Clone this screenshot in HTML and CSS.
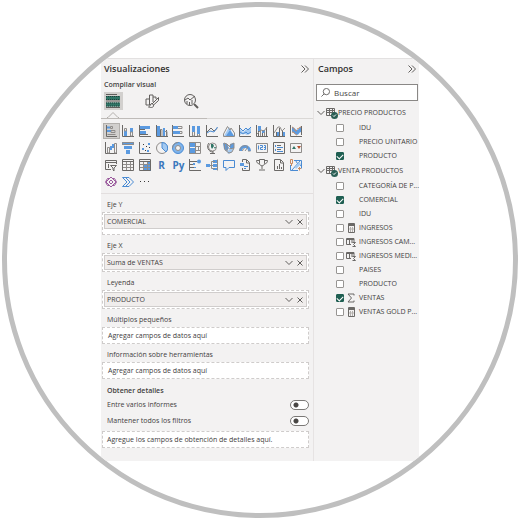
FILE: index.html
```
<!DOCTYPE html>
<html lang="es">
<head>
<meta charset="utf-8">
<meta name="viewport" content="width=device-width, initial-scale=1">
<title>Visualizaciones</title>
<link rel="stylesheet" href="styles.css">
</head>
<body>
<main class="lens">
<div class="workspace">

<section class="visuals">
  <header class="pane-head">
    <h2>Visualizaciones</h2>
    <button class="plain" aria-label="Contraer visualizaciones"><svg class="chev2" viewBox="0 0 8 8"><path d="M.5.5 4 4 .5 7.5M4 .5 7.5 4 4 7.5"/></svg></button>
  </header>
  <h3>Compilar visual</h3>
  <nav class="modes">
    <button class="mode on" aria-label="Compilar"><svg viewBox="0 0 18 18"><path class="d" d="M2 2.500h11M2 9h14M2 15.500h14"/><path class="teal" d="M2 4h14v4H2zM2 10.500h14v4H2z"/><path class="dots" d="M2 4.500h14M2 7.500h14M2 11h14M2 14h14"/></svg></button>
    <button class="mode" aria-label="Formato"><svg viewBox="0 0 18 18"><path class="d" d="M6.500 13H3V7h3.500v6V3H10v7M10 5h3v2M15.500 5.500 9 12M15.500 5.500v3L10 13.500M9 11.500c-2 0-1.500 3-3.500 3.500 3 1 5.500.5 5-2z"/></svg></button>
    <button class="mode" aria-label="Análisis"><svg viewBox="0 0 18 18"><circle class="d" cx="8" cy="8" r="5.500"/><path class="d" d="m12 12 4 4M3 8l3-2 2 2 5-4M5 9v3M7.500 10v3M10 8v4"/><path class="thick" d="m12.500 12.500 3.500 3.500"/></svg></button>
  </nav>
  <svg class="notch" viewBox="0 0 12 6" aria-hidden="true"><path d="M0 5.500h1L6 .5l5 5h1"/></svg>
  <div class="rule"><span></span></div>

  <div class="gallery">
    <button class="on" aria-label="Barras apiladas"><svg viewBox="0 0 12 12"><path class="g" d="M1.500 0v11.500H12"/><path class="b" d="M2 1.500h3v2H2zM2 5h4v2H2z"/><path class="o" d="M5.500 1.500h2v2h-2zM6 5.500h4v2H6zM2.500 9.500h8"/></svg></button>
    <button aria-label="Columnas apiladas"><svg viewBox="0 0 12 12"><path class="g" d="M.5 0v11.500H12"/><path class="b" d="M2 6h3v5H2zM8 3h3v4H8z"/><path class="o" d="M2.500 3.500h2V6h-2zM8.500 7h2v4h-2z"/></svg></button>
    <button aria-label="Barras agrupadas"><svg viewBox="0 0 12 12"><path class="g" d="M.5 0v11.500H12M1 4.500h5M1 9.500h8"/><path class="b" d="M1 1h10v3H1zM1 6h6v3H1z"/></svg></button>
    <button aria-label="Columnas agrupadas"><svg viewBox="0 0 12 12"><path class="g" d="M.5 0v11.500H12M4.500 4v7M10.500 5v6"/><path class="b" d="M1 1h3v10H1zM7 3h2v8H7z"/><path class="o" d="M4 4.500h2V11M9 6.500h2V11"/></svg></button>
    <button aria-label="Barras 100%"><svg viewBox="0 0 12 12"><path class="g" d="M.5 0v11.500H12"/><path class="o" d="M1 1.500h9v2H1zM1 6.500h9v2H1z"/><path class="b" d="M1 1h5v3H1zM1 6h7v3H1z"/></svg></button>
    <button aria-label="Columnas 100%"><svg viewBox="0 0 12 12"><path class="g" d="M.5 0v11.500H12"/><path class="o" d="M3.500 1.500h2V11h-2zM8.500 1.500h2V11h-2z"/><path class="b" d="M3 1h3v6H3zM8 1h3v8H8z"/></svg></button>
    <button aria-label="Líneas"><svg viewBox="0 0 12 12"><path class="g" d="M.5 0v11.500H12M1 7l4-4 3 3 3.500-3"/><path class="bl" d="m1 8 3-2 4 1 3.500-5"/></svg></button>
    <button aria-label="Áreas"><svg viewBox="0 0 12 12"><path class="l" d="m1 11 5-9 5 9z"/><path class="b" d="m3 11 4-6 4 6z"/><path class="o" d="M.5 11.500V9l4-7.500L7 5l1-2 3.500 5v3.500z"/></svg></button>
    <button aria-label="Áreas apiladas"><svg viewBox="0 0 12 12"><path class="l" d="m1 4 3 3 4-3 4-1v5l-4 2-4-2-3 2z"/><path class="bl" d="m1 3 3 3 3-3 2 2 3-3M1 7l3 2 3-2 2 2 3-2"/><path class="g" d="M.5 0v11.500H12"/></svg></button>
    <button aria-label="Líneas y columnas apiladas"><svg viewBox="0 0 12 12"><path class="b" d="M2 1h3v5H2zM6 5h3v3H6zM10 6h1v3h-1z"/><path class="g" d="M.5 0v11.500H12M2.500 6v5M6.500 8v3M10.500 2v9"/><path class="o" d="m1 9 4-4 3 1 3-4M4.500 6v5M8.500 7v4"/></svg></button>
    <button aria-label="Líneas y columnas agrupadas"><svg viewBox="0 0 12 12"><path class="g" d="M.5 0v11.500H12M3.500 7v4M6.500 3v8M9.500 6v5"/><path class="b" d="M4 7h2v4H4zM10 7h2v4h-2z"/><path class="o" d="m1 8 4-6h2l2 4 3-3"/></svg></button>
    <button aria-label="Cintas"><svg viewBox="0 0 12 12"><path class="b" d="M2 2c3 0 3 3 5 3s2-3 4-3v5c-2 0-2 3-4 3S4 7 2 7z"/><path class="or" d="M2 7c3 0 3 3 5 3M7 4c2 0 2-2 4-2M2 2c2 0 2 4 5 4"/><path class="g" d="M.5 0v11.500H12M11.500 1v9"/></svg></button>

    <button aria-label="Cascada"><svg viewBox="0 0 12 12"><path class="g" d="M.5 0v11.500H12"/><path class="o" d="M2.500 5.500h2V11h-2zM9.500 1.500h2V11h-2z"/><path class="b" d="M5 4h2v4H5zM7 2h2v4H7z"/></svg></button>
    <button aria-label="Embudo"><svg viewBox="0 0 12 12"><path class="b" d="M0 0h12v3H0zM2 4h8v3H2zM4 8h4v4H4z"/><path class="o" d="M.5.5h11v2H.5z"/></svg></button>
    <button aria-label="Dispersión"><svg viewBox="0 0 12 12"><path class="g" d="M.5 0v11.500H12"/><path class="b" d="M3 6h2v2H3zM8 8h2v2H8zM9 1h2v2H9z"/><path class="k" d="M4 2h1v1H4zM6 8h1v1H6zM7 4h1v1H7zM10 5h1v1h-1z"/></svg></button>
    <button aria-label="Circular"><svg viewBox="0 0 12 12"><circle class="o" cx="6" cy="6" r="5.500"/><path class="l" d="M6 .5a5.500 5.500 0 0 1 4 9.500L6 6z"/><path class="bl" d="M6 .5a5.500 5.500 0 0 1 4 9.500L6 6z"/></svg></button>
    <button aria-label="Anillos"><svg viewBox="0 0 12 12"><circle class="ring" cx="6" cy="6" r="4"/><circle class="bl" cx="6" cy="6" r="5.500"/><circle class="o" cx="6" cy="6" r="2.500"/><path class="o" d="M6 .5A5.500 5.500 0 0 0 .5 6"/></svg></button>
    <button aria-label="Treemap"><svg viewBox="0 0 12 12"><path class="b" d="M0 0h6v5H0zM0 6h6v6H0z"/><path class="o" d="M.5.5h11v11H.5zM6.500 1v10M7 4.500h4M7 8.500h4M9.500 5v3"/></svg></button>
    <button aria-label="Mapa"><svg viewBox="0 0 12 12"><circle class="o" cx="6.500" cy="5" r="4"/><path class="green" d="M5 2h2l1 2-2 3-1-2zM8 5h2L9 7z"/><path class="g" d="M3 1C0 4 2 10 7 10M7 9v2.500M4 11.500h5"/></svg></button>
    <button aria-label="Mapa coroplético"><svg viewBox="0 0 12 12"><path class="b" d="m0 1 4 1 2 4-2 3-3-2zM7 2l4-1v5L7 7z"/><path class="l" d="m4 9 4-2 3-1-3 5-3 1z"/><path class="o" d="m1 1 3 1 3 3V3l4-2v5l-2 4-3 1-4-3zM4 2v7M6 7l5-1"/></svg></button>
    <button aria-label="Medidor"><svg viewBox="0 0 12 12"><path class="b" d="M0 9a6 6 0 0 1 12 0H9a3 3 0 0 0-6 0z"/><path class="o" d="M.5 9A5.500 5.500 0 0 1 9 4.500M3.500 9a2.500 2.500 0 0 1 2-2.500M6 9l3-4M9 9h2.500"/></svg></button>
    <button aria-label="Tarjeta"><svg viewBox="0 0 12 12"><path class="o" d="M.5 1.500h11v9H.5z"/><path class="bl" d="M2.500 3.500v4M4 3.500h2.500v2h-2v2H7M8 3.500h1.500v4H8M8 5.500h1.500"/></svg></button>
    <button aria-label="Tarjeta de varias filas"><svg viewBox="0 0 12 12"><path class="g" d="M.5.5h11v11H.5z"/><path class="g" d="M4 3.500h4M4 7.500h4"/><path class="bl" d="M2.500 3v2M4 5.500h6M2.500 7v2M4 9.500h6"/></svg></button>
    <button aria-label="KPI"><svg viewBox="0 0 12 12"><path class="o" d="M.5 1.500h11v9H.5z"/><path class="green" d="m2 7 2-3 2 3z"/><path class="rust" d="M7 4h4L9 7z"/></svg></button>

    <button aria-label="Segmentación"><svg viewBox="0 0 12 12"><path class="g" d="M6 10.500H.5v-9h11V5M1 3.500h10M3.500 5v4"/><path class="g" d="M5.500 6.500h6L9 9v3L8 11V9z"/></svg></button>
    <button aria-label="Tabla"><svg viewBox="0 0 12 12"><path class="o" d="M0 5.500h12M0 8.500h12M4.500 2v10M8.500 2v10"/><path class="g" d="M.5.5h11v11H.5zM0 2.500h12"/></svg></button>
    <button aria-label="Matriz"><svg viewBox="0 0 12 12"><path class="b" d="M4 6h8v6H4zM8 3h4v3H8z"/><path class="g" d="M.5.5h11v11H.5zM0 2.500h12"/><path class="o" d="M1 5.500h10M1 8.500h10M4.500 3v8M8.500 3v8"/></svg></button>
    <button class="glyph" aria-label="Objeto visual de R">R</button>
    <button class="glyph" aria-label="Objeto visual de Python">Py</button>
    <button aria-label="Influenciadores clave"><svg viewBox="0 0 12 12"><path class="g" d="M.5 0v11.500H12M1 2.500h7M1 5.500h3M1 8.500h5"/><circle class="b" cx="10" cy="2.500" r="2"/><path class="b" d="M4 4h2v2H4zM5 8h2v1H5z"/></svg></button>
    <button aria-label="Árbol de descomposición"><svg viewBox="0 0 12 12"><path class="b" d="M0 5h4v3H0zM7 1h4v3H7zM7 5h4v3H7zM7 9h4v2H7z"/><path class="o" d="M4 6.500h3M5.500 2.500v7M5.500 2.500H9M5.500 9.500H9M11.500.5v11"/></svg></button>
    <button aria-label="Preguntas y respuestas"><svg viewBox="0 0 12 12"><path class="bl" d="M.5 1.500h11v7H6l-3 3v-3H.5z"/></svg></button>
    <button aria-label="Narración inteligente"><svg viewBox="0 0 12 12"><path class="g" d="M3.500 3V.5h4l3 3v8h-7V9M7.500 1v3H10"/><path class="b" d="M1 4h4v3H1z"/><path class="bl" d="M5 7.500h4M5 9.500h2"/></svg></button>
    <button aria-label="Métricas"><svg viewBox="0 0 12 12"><path class="g" d="M3.500.5h5v4c0 3-5 3-5 0zM3 1.500H.5c0 2 1 3 3 3.500M9 1.500h2.500c0 2-1 3-3 3.500M6 7v3M3 11h6"/></svg></button>
    <button aria-label="Informe paginado"><svg viewBox="0 0 12 12"><path class="g" d="M1.500.5h6l3 3v8h-9zM7.500 1v3H10M4.500 7v3M6.500 5v5M8.500 8v2"/></svg></button>
    <button aria-label="ArcGIS"><svg viewBox="0 0 12 12"><path class="bl" d="M4 1.500h7.500v8M.5 6v5.500H8M10 2 2 11M6 2c0 3 5 3 5 5"/><path class="l" d="m5 8 4-5 2 2-5 5z"/><path class="or" d="M.5.5h2v4h-2zM1.500 5v2M8 9.500h3M9.500 8v3.500"/></svg></button>

    <button aria-label="Power Apps"><svg viewBox="0 0 12 12"><path class="pu" d="m6 1-5 5 5 5 5-5zM4 2.500H2.500L.5 6l2 3.500H4M8 2.500h1.500l2 3.500-2 3.500H8M6 4 4 6l2 2 2-2z"/></svg></button>
    <button aria-label="Power Automate"><svg viewBox="0 0 12 12"><path class="bl" d="M.5 1.500H7L11.500 6 7 10.500H.5L5 6zM4 2l4 4-4 4"/></svg></button>
    <button aria-label="Más objetos visuales"><svg viewBox="0 0 12 12"><path class="k" d="M1 5h1v1H1zM5 5h1v1H5zM9 5h1v1H9z"/></svg></button>
  </div>

  <div class="wells">
    <h4>Eje Y</h4>
    <div class="well roomy"><div class="pill"><span>COMERCIAL</span><button class="plain" aria-label="Opciones de COMERCIAL"><svg class="down" viewBox="0 0 8 6"><path d="m.5 1 3.500 3.500L7.500 1"/></svg></button><button class="plain" aria-label="Quitar COMERCIAL"><svg class="cross" viewBox="0 0 6 6"><path d="m.5.5 5 5m0-5-5 5"/></svg></button></div></div>
    <h4>Eje X</h4>
    <div class="well"><div class="pill"><span>Suma de VENTAS</span><button class="plain" aria-label="Opciones de Suma de VENTAS"><svg class="down" viewBox="0 0 8 6"><path d="m.5 1 3.500 3.500L7.500 1"/></svg></button><button class="plain" aria-label="Quitar Suma de VENTAS"><svg class="cross" viewBox="0 0 6 6"><path d="m.5.5 5 5m0-5-5 5"/></svg></button></div></div>
    <h4>Leyenda</h4>
    <div class="well"><div class="pill"><span>PRODUCTO</span><button class="plain" aria-label="Opciones de PRODUCTO"><svg class="down" viewBox="0 0 8 6"><path d="m.5 1 3.500 3.500L7.500 1"/></svg></button><button class="plain" aria-label="Quitar PRODUCTO"><svg class="cross" viewBox="0 0 6 6"><path d="m.5.5 5 5m0-5-5 5"/></svg></button></div></div>
    <h4>Múltiplos pequeños</h4>
    <div class="well empty">Agregar campos de datos aquí</div>
    <h4>Información sobre herramientas</h4>
    <div class="well empty">Agregar campos de datos aquí</div>
    <h4 class="strong">Obtener detalles</h4>
    <label class="switch">Entre varios informes<input type="checkbox" role="switch"></label>
    <label class="switch">Mantener todos los filtros<input type="checkbox" role="switch"></label>
    <div class="well empty drill">Agregue los campos de obtención de detalles aquí.</div>
  </div>
</section>

<section class="fields">
  <header class="pane-head">
    <h2>Campos</h2>
    <button class="plain" aria-label="Contraer campos"><svg class="chev2" viewBox="0 0 8 8"><path d="M.5.5 4 4 .5 7.5M4 .5 7.5 4 4 7.5"/></svg></button>
  </header>
  <label class="search"><svg viewBox="0 0 10 10"><circle cx="6" cy="4" r="3.500"/><path d="M3.500 6.500.5 9.500"/></svg><input type="text" placeholder="Buscar" aria-label="Buscar"></label>

  <button class="table-name"><svg class="down" viewBox="0 0 8 6"><path d="m.5 1 3.500 3.500L7.500 1"/></svg><svg class="tbl" viewBox="0 0 12 12"><path class="g" d="M.5 1.500h8v7h-8zM0 3.500h9M0 5.500h9M3.500 1v8M6.500 1v8"/><circle class="dot" cx="8.500" cy="8.500" r="3.500"/><path class="tick" d="m7 8.500 1 1 2-2"/></svg>PRECIO PRODUCTOS</button>
  <ul>
    <li><label><input type="checkbox"><i></i>IDU</label></li>
    <li><label><input type="checkbox"><i></i>PRECIO UNITARIO</label></li>
    <li><label><input type="checkbox" checked><i></i>PRODUCTO</label></li>
  </ul>
  <button class="table-name"><svg class="down" viewBox="0 0 8 6"><path d="m.5 1 3.500 3.500L7.500 1"/></svg><svg class="tbl" viewBox="0 0 12 12"><path class="g" d="M.5 1.500h8v7h-8zM0 3.500h9M0 5.500h9M3.500 1v8M6.500 1v8"/><circle class="dot" cx="8.500" cy="8.500" r="3.500"/><path class="tick" d="m7 8.500 1 1 2-2"/></svg>VENTA PRODUCTOS</button>
  <ul>
    <li><label><input type="checkbox"><i></i>CATEGORÍA DE P...</label></li>
    <li><label><input type="checkbox" checked><i></i>COMERCIAL</label></li>
    <li><label><input type="checkbox"><i></i>IDU</label></li>
    <li><label><input type="checkbox"><i><svg viewBox="0 0 10 10"><path class="g" d="M2.500.5h6v9h-6zM2.500 1.500h6M2.500 2.500h6"/><path class="o faint" d="M4.500 4v5M6.500 4v5M3 6h5"/></svg></i>INGRESOS</label></li>
    <li><label><input type="checkbox"><i><svg viewBox="0 0 10 10"><path class="g" d="M8 6V1.500H.5v6H5M.5 2.500H8M3.500 2v5M6 2v4M6.500 5.500h3L7.500 7.500l2 2h-3"/></svg></i>INGRESOS CAM...</label></li>
    <li><label><input type="checkbox"><i><svg viewBox="0 0 10 10"><path class="g" d="M8 6V1.500H.5v6H5M.5 2.500H8M3.500 2v5M6 2v4M6.500 5.500h3L7.500 7.500l2 2h-3"/></svg></i>INGRESOS MEDI...</label></li>
    <li><label><input type="checkbox"><i></i>PAISES</label></li>
    <li><label><input type="checkbox"><i></i>PRODUCTO</label></li>
    <li><label><input type="checkbox" checked><i><svg viewBox="0 0 10 10"><path class="g" d="M8 2.500V1H2l3.500 4L2 9h6V7.500"/></svg></i>VENTAS</label></li>
    <li><label><input type="checkbox"><i><svg viewBox="0 0 10 10"><path class="g" d="M2.500.5h6v9h-6zM2.500 1.500h6M2.500 2.500h6"/><path class="o faint" d="M4.500 4v5M6.500 4v5M3 6h5"/></svg></i>VENTAS GOLD P...</label></li>
  </ul>
</section>

</div>
</main>
</body>
</html>
```
FILE: styles.css
```
* { box-sizing: border-box; }

body {
  margin: 0;
  padding: 2px;
  background: #fff;
  color: #424040;
  font: 7px/10px "Open Sans", "Noto Sans", sans-serif;
}

h2, h3, h4, ul { margin: 0; padding: 0; }
button, input { font: inherit; color: inherit; }
button { padding: 0; border: 0; background: none; }
svg { display: block; fill: none; stroke: #605e5c; }

.lens {
  aspect-ratio: 1;
  padding: 51px 94px;
  border: 5px solid #bfbfbf;
  border-radius: 50%;
  overflow: hidden;
}

.workspace {
  display: grid;
  grid-template-columns: minmax(0, 1fr) 105px;
  background: #f3f2f2;
  border-top: 1px solid #e3e1e1;
}

.visuals { border-right: 1px solid #e6e3e3; padding-bottom: 13px; }

.pane-head {
  display: flex;
  align-items: center;
  justify-content: space-between;
  height: 20px;
  padding: 0 4px 0 3px;
}
.fields .pane-head { padding: 0 3px 0 4px; }
h2 { font-size: 9px; line-height: 12px; font-weight: 600; color: #323130; }
.chev2 { width: 8px; height: 8px; }
.down { width: 8px; height: 6px; }
.cross { width: 6px; height: 6px; }

h3 { padding-left: 3px; font-size: 7px; line-height: 12px; font-weight: 600; }

.modes { display: flex; gap: 20px; padding: 1px 3px 0; }
.mode { width: 19px; height: 18px; }
.mode.on { background: #d2d0ce; }
.mode svg { width: 18px; height: 18px; }
.teal { fill: #2f7566; stroke: none; }
.dots { stroke: #1f3f3a; stroke-dasharray: 1 1; }
.thick { stroke-width: 2; }

.notch { width: 12px; height: 6px; margin: 2px 0 0 6px; stroke: #b3b0ad; }
.rule { height: 1px; background: #dad8d6; }
.rule span { display: block; width: 50%; height: 1px; background: #bebbb8; }

.gallery {
  display: grid;
  grid-template-columns: repeat(12, 1fr);
  row-gap: 1px;
  padding: 4px 9px 3px 2px;
  border-bottom: 1px solid #e3dfdf;
}
.gallery button { display: grid; place-items: center; height: 16px; }
.gallery button.on { background: #d2d0ce; outline: 1px solid #b3b0ad; outline-offset: -1px; }
.gallery svg { width: 12px; height: 12px; }
.g { stroke: #6b6967; }
.o { stroke: #8f8c8a; }
.bl { stroke: #4a8bd3; }
.b { fill: #5b9ae0; stroke: none; }
.l { fill: #a3c9f1; stroke: none; }
.k { fill: #3b3a39; stroke: none; }
.or { stroke: #c98a60; }
.pu { stroke: #9a5a9d; }
.ring { stroke: #7fb3ea; stroke-width: 3; }
.green { fill: #2f7566; stroke: none; }
.rust { fill: #b5502f; stroke: none; }
.faint { stroke: #b3b0ad; }
.gallery .glyph { font-size: 10px; line-height: 12px; font-weight: 700; color: #3b78bd; }

.wells { padding: 5px 4px 0 0; }
h4 { padding: 0 6px; margin-top: 5px; line-height: 12px; font-weight: 400; }
h4:first-child { margin-top: 0; }
h4.strong { margin-top: 6px; font-weight: 600; }

.well {
  margin: 1px 0 0 1px;
  padding: 1px;
  border: 1px dashed #cfcccb;
  background: #fff;
}
.well.roomy { padding-bottom: 5px; margin-bottom: 5px; }
.pill {
  display: flex;
  align-items: center;
  gap: 4px;
  padding: 1px 3px 1px 2px;
  border: 1px solid #d0cdcc;
  background: #f0edec;
  line-height: 11px;
}
.pill span { flex: 1; }
.well.empty { padding: 2px 5px; line-height: 11px; }
.well.drill { padding: 2px 4px; margin-top: 2px; }

.switch {
  display: flex;
  align-items: center;
  justify-content: space-between;
  height: 16px;
  padding-left: 6px;
}
.switch input {
  appearance: none;
  width: 19px;
  height: 10px;
  margin: 0;
  border: 1px solid #7a7876;
  border-radius: 5px;
  background: radial-gradient(circle at 5px 4px, #484644 2px, #fff 3px);
}

.search {
  display: flex;
  align-items: center;
  gap: 4px;
  height: 17px;
  margin: 5px 1px 4px 2px;
  padding: 0 4px;
  border: 1px solid #8a8886;
  background: #fff;
}
.search svg { width: 9px; height: 9px; }
.search input {
  flex: 1;
  min-width: 0;
  padding: 0;
  border: 0;
  outline: 0;
  background: none;
  font-size: 8px;
  line-height: 12px;
}
.search input::placeholder { color: #484644; opacity: 1; }

.table-name {
  display: flex;
  align-items: center;
  width: 100%;
  height: 16px;
  padding-left: 3px;
  white-space: nowrap;
}
.tbl { width: 12px; height: 12px; margin-left: 1px; }
.dot { fill: #2b5f55; stroke: none; }
.tick { stroke: #fff; }

.fields ul { list-style: none; }
.fields li label {
  display: flex;
  align-items: center;
  height: 14px;
  padding-left: 22px;
  white-space: nowrap;
}
.fields li input {
  appearance: none;
  display: grid;
  place-items: center;
  width: 8px;
  height: 8px;
  margin: 0;
  border: 1px solid #979593;
  border-radius: 1px;
  background: #fff;
}
.fields li input:checked {
  border-color: #1f5f52;
  background: #1f5f52;
}
.fields li input:checked::after {
  content: "";
  width: 5px;
  height: 3px;
  border: solid #fff;
  border-width: 0 0 1px 1px;
  transform: rotate(-45deg);
}
.fields li i { width: 10px; height: 10px; margin: 0 3px 0 2px; }
.fields li i svg { width: 10px; height: 10px; }
```
